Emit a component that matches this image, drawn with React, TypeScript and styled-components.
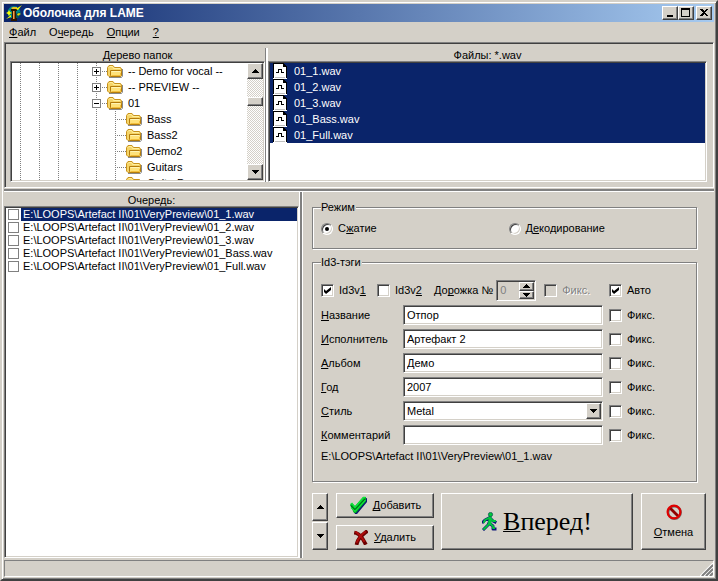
import React from "react";
import styled, { createGlobalStyle, css } from "styled-components";

const face = "#d4d0c8";
const navy = "#0a246a";
const shade = "#808080";
const dark = "#404040";

const Global = createGlobalStyle`
  * { box-sizing: border-box; }
  html, body { margin: 0; padding: 0; background: ${face}; }
  body, button, input, select {
    font-family: "Liberation Sans", Arial, sans-serif;
    font-size: 11px;
    line-height: 13px;
    color: #000;
  }
  u { text-underline-offset: 1px; text-decoration-thickness: 1px; text-decoration-skip-ink: none; }
`;

const raised = css`
  background: ${face};
  border: 1px solid;
  border-color: #fff ${dark} ${dark} #fff;
  box-shadow: inset -1px -1px 0 ${shade};
`;

const sunken = css`
  border: 1px solid;
  border-color: ${shade} #fff #fff ${shade};
  box-shadow: inset 1px 1px 0 ${dark}, inset -1px -1px 0 ${face};
  padding: 1px;
`;

const Window = styled.main`
  display: flex;
  flex-direction: column;
  min-height: 100vh;
  padding: 2px;
  background: ${face};
  border: 2px solid;
  border-color: ${face} ${dark} ${dark} ${face};
  box-shadow: inset 1px 1px 0 #fff, inset -1px -1px 0 ${shade};
`;

const TitleBar = styled.header`
  display: flex;
  align-items: center;
  flex: none;
  height: 18px;
  padding: 0 2px;
  gap: 1px;
  background: linear-gradient(to right, ${navy}, #a6caf0);
`;

const Title = styled.h1`
  flex: 1;
  margin: 0;
  color: #fff;
  font-size: 12px;
  line-height: 16px;
  font-weight: bold;
`;

const TitleButtons = styled.div`
  display: flex;
`;

const TitleButton = styled.button`
  ${raised}
  width: 16px;
  height: 14px;
  padding: 0;
  display: flex;
  align-items: center;
  justify-content: center;
  &:last-child { margin-left: 2px; }
`;

const MenuBar = styled.nav`
  display: flex;
  flex: none;
  align-items: center;
  gap: 13px;
  height: 20px;
  padding: 0 5px;
`;

const MenuItem = styled.button`
  border: 0;
  padding: 0;
  background: none;
`;

const Browser = styled.section`
  ${sunken}
  display: flex;
  flex: none;
  height: 146px;
  padding: 1px 6px 5px 5px;
`;

const Pane = styled.div<{ $width?: string }>`
  display: flex;
  flex-direction: column;
  min-width: 0;
  min-height: 0;
  flex: ${(p) => (p.$width ? `0 0 ${p.$width}` : "1 1 0")};
`;

const PaneTitle = styled.h2<{ $height: number }>`
  margin: 0;
  flex: none;
  height: ${(p) => p.$height}px;
  line-height: 12px;
  padding-top: ${(p) => p.$height - 12}px;
  font-size: 11px;
  font-weight: normal;
  text-align: center;
`;

const SplitLine = styled.div`
  flex: none;
  width: 3px;
  margin-top: 4px;
  border-left: 1px solid ${shade};
  border-right: 2px solid #fff;
`;

const HorizontalSplitter = styled.div`
  flex: none;
  height: 4px;
  background: ${shade};
  border-top: 1px solid ${face};
  border-bottom: 1px solid #fff;
`;

const VerticalSplitter = styled.div`
  flex: none;
  width: 4px;
  background: ${shade};
  border-left: 1px solid #fff;
  border-right: 1px solid #fff;
`;

const ListBox = styled.div`
  ${sunken}
  display: flex;
  flex: 1;
  min-height: 0;
  background: #fff;
  overflow: hidden;
`;

const Rows = styled.ul`
  flex: 1;
  min-width: 0;
  margin: 0;
  padding: 0;
  list-style: none;
  overflow: hidden;
  white-space: nowrap;
`;

const TreeRow = styled.li`
  display: flex;
  height: 16px;
  align-items: center;
`;

const dotsDown = `repeating-linear-gradient(to bottom, ${shade} 0 1px, transparent 1px 2px) 8px 0 / 1px 100% no-repeat`;
const dotsAcross = `repeating-linear-gradient(to right, ${shade} 0 1px, transparent 1px 2px) 8px 8px / 11px 1px no-repeat`;

const Indent = styled.span<{ $branch?: boolean }>`
  flex: none;
  display: flex;
  align-items: center;
  width: 19px;
  height: 16px;
  padding-left: 4px;
  background: ${(p) => (p.$branch ? `${dotsDown}, ${dotsAcross}` : dotsDown)};
`;

const Expander = styled.button`
  width: 9px;
  height: 9px;
  padding: 0;
  border: 1px solid ${shade};
  background: #fff;
  display: flex;
`;

const TreeLabel = styled.span`
  margin-left: 5px;
`;

const ScrollBar = styled.div`
  display: flex;
  flex-direction: column;
  flex: none;
  width: 16px;
  background: repeating-conic-gradient(#fff 0 25%, ${face} 0 50%) 0 0 / 2px 2px;
`;

const ScrollButton = styled.button`
  ${raised}
  flex: none;
  width: 16px;
  height: 16px;
  padding: 0;
  display: flex;
  align-items: center;
  justify-content: center;
`;

const Thumb = styled.div`
  ${raised}
  height: 9px;
  margin: 18px 0 auto;
`;

const FileRow = styled.li`
  display: flex;
  align-items: center;
  height: 16px;
  gap: 7px;
  padding-left: 3px;
  color: #fff;
  background: ${navy};
`;

const Work = styled.div`
  display: flex;
  flex: 1;
`;

const QueueRow = styled.li`
  height: 13px;
`;

const QueueLabel = styled.label<{ $selected: boolean }>`
  display: flex;
  height: 13px;
  align-items: center;
  gap: 2px;
  padding-left: 2px;
  span {
    flex: 1;
    padding-left: 2px;
    line-height: 13px;
    color: ${(p) => (p.$selected ? "#fff" : "#000")};
    background: ${(p) => (p.$selected ? navy : "transparent")};
  }
`;

const FlatCheck = styled.input`
  appearance: none;
  flex: none;
  width: 11px;
  height: 11px;
  margin: 0;
  border: 1px solid ${shade};
  background: #fff;
  &:checked { box-shadow: inset 0 0 0 2px #fff; background: #000; }
`;

const Options = styled.form`
  flex: 1;
  min-width: 0;
  display: flex;
  flex-direction: column;
  padding: 9px 8px 8px 9px;
`;

const Group = styled.fieldset`
  min-width: 0;
  margin: 0 9px 7px 0;
  padding: 0 0 0 8px;
  border: 1px solid ${shade};
  box-shadow: 1px 1px 0 #fff, inset 1px 1px 0 #fff;
`;

const Legend = styled.legend`
  padding: 0 1px 0 0;
  background: ${face};
`;

const ModeRow = styled.div`
  display: grid;
  grid-template-columns: 1fr 1fr;
  height: 34px;
  padding: 8px 0 0;
  align-items: start;
`;

const Choice = styled.label<{ $disabled?: boolean; $width?: number }>`
  display: flex;
  align-items: center;
  gap: 5px;
  width: ${(p) => (p.$width ? `${p.$width}px` : "auto")};
  color: ${(p) => (p.$disabled ? shade : "#000")};
  text-shadow: ${(p) => (p.$disabled ? "1px 1px 0 #fff" : "none")};
`;

const Check = styled.input`
  appearance: none;
  ${sunken}
  flex: none;
  display: grid;
  place-items: center;
  width: 13px;
  height: 13px;
  margin: 0;
  background: #fff;
  &:disabled { background: ${face}; }
  &:checked::before {
    content: "";
    width: 7px;
    height: 7px;
    background: #000;
    clip-path: polygon(0 29%, 29% 58%, 100% 0, 100% 42%, 29% 100%, 0 72%);
  }
`;

const Radio = styled(Check)`
  border-radius: 50%;
  width: 12px;
  height: 12px;
  &:checked::before {
    width: 4px;
    height: 4px;
    clip-path: none;
    border-radius: 50%;
  }
`;

const TagGrid = styled.div`
  display: grid;
  grid-template-columns: 82px minmax(0, 1fr) 87px;
  row-gap: 4px;
  align-items: center;
  padding: 11px 6px 0 0;
`;

const TagTop = styled.div`
  grid-column: 1 / 3;
  display: flex;
  align-items: center;
`;

const FixCell = styled.div`
  padding-left: 6px;
`;

const TrackLabel = styled.label`
  margin-right: 3px;
  white-space: nowrap;
`;

const Spin = styled.span`
  ${sunken}
  display: flex;
  flex: none;
  width: 40px;
  height: 21px;
  margin-right: 8px;
`;

const SpinInput = styled.input`
  flex: 1;
  width: 0;
  min-width: 0;
  border: 0;
  padding: 0 0 0 2px;
  background: none;
  color: ${shade};
`;

const SpinButtons = styled.span`
  display: flex;
  flex-direction: column;
  width: 15px;
`;

const SpinButton = styled.button`
  ${raised}
  flex: 1;
  min-height: 0;
  padding: 0;
  display: flex;
  align-items: center;
  justify-content: center;
`;

const TextField = styled.input`
  ${sunken}
  width: 100%;
  height: 20px;
  padding: 0 3px;
  background: #fff;
  outline: none;
`;

const SelectBox = styled.span`
  ${sunken}
  position: relative;
  display: flex;
  height: 20px;
  background: #fff;
`;

const Select = styled.select`
  appearance: none;
  flex: 1;
  width: 100%;
  border: 0;
  padding: 0 18px 0 2px;
  background: none;
  outline: none;
`;

const SelectArrow = styled.span`
  ${raised}
  position: absolute;
  top: 1px;
  right: 1px;
  bottom: 1px;
  width: 15px;
  display: flex;
  align-items: center;
  justify-content: center;
  pointer-events: none;
`;

const TagPath = styled.p`
  margin: 5px 0 18px;
`;

const Actions = styled.div`
  display: flex;
  margin-top: 4px;
  height: 57px;
`;

const Stack = styled.div<{ $gap: number; $width: number }>`
  display: flex;
  flex-direction: column;
  flex: none;
  width: ${(p) => p.$width}px;
  gap: ${(p) => p.$gap}px;
`;

const PushButton = styled.button<{ $big?: boolean; $column?: boolean }>`
  ${raised}
  flex: 1;
  min-width: 0;
  min-height: 0;
  padding: 0;
  display: flex;
  flex-direction: ${(p) => (p.$column ? "column" : "row")};
  align-items: center;
  justify-content: center;
  gap: 6px;
  ${(p) =>
    p.$big &&
    css`
      margin: 0 8px 0 7px;
      font-family: "Liberation Serif", "Times New Roman", serif;
      font-size: 26px;
      line-height: 30px;
    `}
`;

const CancelSlot = styled.div`
  display: flex;
  flex: none;
  width: 65px;
`;

const ActionGap = styled.div`
  flex: none;
  width: 8px;
`;

const StatusBar = styled.footer`
  flex: none;
  display: flex;
  justify-content: flex-end;
  align-items: flex-end;
  height: 17px;
  margin-top: 2px;
  border: 1px solid;
  border-color: ${shade} #fff #fff ${shade};
`;

const Arrow = ({ up, size = 7 }: { up?: boolean; size?: number }) => {
  const h = (size + 1) / 2;
  return (
    <svg width={size} height={h} shapeRendering="crispEdges" aria-hidden="true">
      <path d={up ? `M${size / 2} 0L${size} ${h}H0Z` : `M0 0H${size}L${size / 2} ${h}Z`} />
    </svg>
  );
};

const AppIcon = () => (
  <svg width="16" height="16" viewBox="0 0 16 16" aria-hidden="true">
    <circle cx="8" cy="7.5" r="6.5" fill="#008484" />
    <path d="M9 9L14 7L13 12L9 14Z" fill="#00505c" />
    <path d="M5 4H11V6H10V13H11V16H5V13H6V6H5Z" fill="#2c1800" />
    <path d="M7 6H9V14H7Z" fill="#a85c18" />
    <path d="M7 6H8V14H7Z" fill="#f0a050" />
    <path d="M5 3L7 2L11 2V4H6Z" fill="#e8c020" />
    <path d="M10 4L16 0L12 5Z" fill="#ff0" />
    <path d="M0 8L2 7L3 5L4 7L6 8L4 9L3 11L2 9Z" fill="#ff0" />
    <path d="M11 9L13 8L15 9L13 10L12 11Z" fill="#e8e000" />
    <path d="M0 14L5 10L5 12Z" fill="#ff0" />
  </svg>
);

const Folder = () => (
  <svg width="16" height="16" viewBox="0 0 16 16" aria-hidden="true">
    <path d="M2 14.5H14.5L15.5 13V6" fill="none" stroke="#8a8a8a" />
    <path d="M.5 12V4.5L2 2.5H6L7.5 4.5H13.5L14.5 6V12.5L13.5 13.5H2Z" fill="#f5d468" stroke="#c8921c" />
    <path d="M2 4.5L3 3.5H5.5L6.5 5.5H13" fill="none" stroke="#fff0a0" />
    <path d="M3.5 7.5H13.5L14.5 8.5V12.5L13.5 13.5H4L3.5 12.5Z" fill="#ffe27a" stroke="#b47c0c" />
    <path d="M4.5 8.5H13" stroke="#fff4b4" fill="none" />
    <path d="M4.5 12.5H13.5V10" stroke="#f2bf3c" fill="none" />
  </svg>
);

const WaveFile = () => (
  <svg width="14" height="16" viewBox="0 0 14 16" shapeRendering="crispEdges" aria-hidden="true">
    <path d="M0 0H10L14 4V16H0Z" fill="#fff" />
    <path d="M.5 15V.5H10.5V3.5H13.5V15" fill="none" stroke="#000" />
    <path d="M11 1H12V2H13V4H11Z" fill="#000" />
    <path d="M2 14.5H12" stroke="#c0c0c0" />
    <path d="M3 9.5H5.5V6.5H8.5V9.5H11" fill="none" stroke="#000" />
  </svg>
);

const CheckMark = () => (
  <svg width="18" height="19" viewBox="0 0 18 19" aria-hidden="true">
    <path d="M2 10L4 9L7 13L15 3L18 2V6L8 18L6 18Z" fill="#0a1a70" />
    <path d="M1 9L3 7L6 10L14 1H17V5L7 17H5Z" fill="#00a424" />
    <path d="M1.5 8.5L3 7.5L6 11.5L14.5 1.5H16.5" fill="none" stroke="#10e83c" strokeWidth="1.4" />
    <path d="M2 11.5L6 15.5L16.5 4" fill="none" stroke="#10e83c" strokeWidth="1.2" />
    <path d="M2 10L6 13.5L16 3" fill="none" stroke="#006414" strokeWidth=".9" />
  </svg>
);

const CrossMark = () => (
  <svg width="14" height="15" viewBox="0 0 14 15" aria-hidden="true">
    <path d="M2 3C6 4 9 9 11 13M12 2C8 5 4 9 3 13" fill="none" stroke="#6c0000" strokeWidth="3.8" strokeLinecap="square" />
    <path d="M2 2C5 4 8 7 10 11M11 2C8 4 4 9 3 12" fill="none" stroke="#b00c0c" strokeWidth="2" strokeLinecap="round" />
  </svg>
);

const Walker = () => (
  <svg width="15" height="19" viewBox="0 0 15 19" aria-hidden="true">
    <g fill="none" strokeLinecap="square" strokeLinejoin="round">
      <path d="M8 6L7 12L4 15L2 17M7 11L11 14V17H13M7 6L3 8L1 10M8 6L11 9L13 10" stroke="#0a1478" strokeWidth="3" />
      <path d="M8 6L7 12L4 15L2 17M7 11L11 14V16H12M7 6L3 8L2 10M8 6L11 9L13 9" stroke="#00c83c" strokeWidth="1.8" />
      <path d="M8 6V11" stroke="#00c83c" strokeWidth="3" />
    </g>
    <circle cx="8.5" cy="2.5" r="2.1" fill="#00c83c" stroke="#0a5a50" strokeWidth=".8" />
  </svg>
);

const Forbidden = () => (
  <svg width="16" height="16" viewBox="0 0 16 16" aria-hidden="true">
    <circle cx="8.5" cy="8.5" r="6.3" fill="none" stroke="#707070" strokeWidth="2.4" />
    <path d="M4 4L12 12" stroke="#900000" strokeWidth="2.8" />
    <circle cx="8" cy="8" r="6.4" fill="none" stroke="#e00000" strokeWidth="2.2" />
  </svg>
);

const Grip = () => (
  <svg width="13" height="13" viewBox="0 0 13 13" aria-hidden="true">
    <path d="M0 13L13 0M4 13L13 4M8 13L13 8" stroke="#fff" strokeWidth="1.2" />
    <path d="M2 13L13 2M6 13L13 6M10 13L13 10" stroke={shade} strokeWidth="2" />
  </svg>
);

type Node = { name: string; depth: number; open?: boolean };

const tree: Node[] = [
  { name: "-- Demo for vocal --", depth: 4, open: false },
  { name: "-- PREVIEW --", depth: 4, open: false },
  { name: "01", depth: 4, open: true },
  { name: "Bass", depth: 5 },
  { name: "Bass2", depth: 5 },
  { name: "Demo2", depth: 5 },
  { name: "Guitars", depth: 5 },
  { name: "GuitarDrums", depth: 5 },
];

const files = ["01_1.wav", "01_2.wav", "01_3.wav", "01_Bass.wav", "01_Full.wav"];
const folder = "E:\\LOOPS\\Artefact II\\01\\VeryPreview\\";

const tags = [
  { id: "title", key: "Н", rest: "азвание", value: "Отпор" },
  { id: "artist", key: "И", rest: "сполнитель", value: "Артефакт 2" },
  { id: "album", key: "А", rest: "льбом", value: "Демо" },
  { id: "year", key: "Г", rest: "од", value: "2007" },
  { id: "genre", key: "С", rest: "тиль", value: "Metal" },
  { id: "comment", key: "К", rest: "омментарий", value: "" },
];

export default function App() {
  return (
    <>
      <Global />
      <Window>
        <TitleBar>
          <AppIcon />
          <Title>Оболочка для LAME</Title>
          <TitleButtons>
            <TitleButton aria-label="Свернуть">
              <svg width="12" height="10"><path d="M3 7H9V9H3Z" /></svg>
            </TitleButton>
            <TitleButton aria-label="Развернуть">
              <svg width="12" height="10" shapeRendering="crispEdges"><path d="M1 0H10V9H1ZM2 2V8H9V2Z" fillRule="evenodd" /></svg>
            </TitleButton>
            <TitleButton aria-label="Закрыть">
              <svg width="12" height="10" shapeRendering="crispEdges"><path d="M2 1H4L6 3L8 1H10L7 4.5L10 8H8L6 6L4 8H2L5 4.5Z" /></svg>
            </TitleButton>
          </TitleButtons>
        </TitleBar>
        <MenuBar>
          <MenuItem><u>Ф</u>айл</MenuItem>
          <MenuItem>О<u>ч</u>ередь</MenuItem>
          <MenuItem><u>О</u>пции</MenuItem>
          <MenuItem><u>?</u></MenuItem>
        </MenuBar>

        <Browser>
          <Pane $width="255px">
            <PaneTitle $height={17}>Дерево папок</PaneTitle>
            <ListBox>
              <Rows>
                {tree.map((node) => (
                  <TreeRow key={node.name}>
                    {Array.from({ length: node.depth }, (_, i) => (
                      <Indent key={i} />
                    ))}
                    <Indent $branch>
                      {node.open !== undefined && (
                        <Expander aria-label={node.open ? "Свернуть папку" : "Раскрыть папку"}>
                          <svg width="7" height="7" shapeRendering="crispEdges">
                            <path d={node.open ? "M1 3H6V4H1Z" : "M1 3H6V4H1ZM3 1H4V6H3Z"} />
                          </svg>
                        </Expander>
                      )}
                    </Indent>
                    <Folder />
                    <TreeLabel>{node.name}</TreeLabel>
                  </TreeRow>
                ))}
              </Rows>
              <ScrollBar>
                <ScrollButton aria-label="Вверх"><Arrow up /></ScrollButton>
                <Thumb />
                <ScrollButton aria-label="Вниз"><Arrow /></ScrollButton>
              </ScrollBar>
            </ListBox>
          </Pane>
          <SplitLine />
          <Pane>
            <PaneTitle $height={17}>Файлы: *.wav</PaneTitle>
            <ListBox>
              <Rows>
                {files.map((file) => (
                  <FileRow key={file}>
                    <WaveFile />
                    {file}
                  </FileRow>
                ))}
              </Rows>
            </ListBox>
          </Pane>
        </Browser>

        <HorizontalSplitter />

        <Work>
          <Pane $width="295px">
            <PaneTitle $height={14}>Очередь:</PaneTitle>
            <ListBox>
              <Rows>
                {files.map((file, i) => (
                  <QueueRow key={file}>
                    <QueueLabel $selected={i === 0}>
                      <FlatCheck type="checkbox" />
                      <span>{folder + file}</span>
                    </QueueLabel>
                  </QueueRow>
                ))}
              </Rows>
            </ListBox>
          </Pane>
          <VerticalSplitter />
          <Options onSubmit={(e) => e.preventDefault()}>
            <Group>
              <Legend>Режим</Legend>
              <ModeRow>
                <Choice>
                  <Radio type="radio" name="mode" defaultChecked />
                  <span>С<u>ж</u>атие</span>
                </Choice>
                <Choice>
                  <Radio type="radio" name="mode" />
                  <span>Д<u>е</u>кодирование</span>
                </Choice>
              </ModeRow>
            </Group>

            <Group>
              <Legend>Id3-тэги</Legend>
              <TagGrid>
                <TagTop>
                  <Choice $width={56}>
                    <Check type="checkbox" defaultChecked />
                    <span>Id3v<u>1</u></span>
                  </Choice>
                  <Choice $width={57}>
                    <Check type="checkbox" />
                    <span>Id3v<u>2</u></span>
                  </Choice>
                  <TrackLabel htmlFor="track">До<u>р</u>ожка №</TrackLabel>
                  <Spin>
                    <SpinInput id="track" defaultValue="0" disabled />
                    <SpinButtons>
                      <SpinButton type="button" aria-label="Больше"><Arrow up /></SpinButton>
                      <SpinButton type="button" aria-label="Меньше"><Arrow /></SpinButton>
                    </SpinButtons>
                  </Spin>
                  <Choice $disabled>
                    <Check type="checkbox" disabled />
                    <span>Фикс.</span>
                  </Choice>
                </TagTop>
                <FixCell>
                  <Choice>
                    <Check type="checkbox" defaultChecked />
                    <span>Авто</span>
                  </Choice>
                </FixCell>
                {tags.map((tag) => (
                  <React.Fragment key={tag.id}>
                    <label htmlFor={tag.id}><u>{tag.key}</u>{tag.rest}</label>
                    {tag.id === "genre" ? (
                      <SelectBox>
                        <Select id={tag.id} defaultValue={tag.value}>
                          <option>{tag.value}</option>
                        </Select>
                        <SelectArrow><Arrow /></SelectArrow>
                      </SelectBox>
                    ) : (
                      <TextField id={tag.id} defaultValue={tag.value} />
                    )}
                    <FixCell>
                      <Choice>
                        <Check type="checkbox" />
                        <span>Фикс.</span>
                      </Choice>
                    </FixCell>
                  </React.Fragment>
                ))}
              </TagGrid>
              <TagPath>{folder + files[0]}</TagPath>
            </Group>

            <Actions>
              <Stack $gap={1} $width={16}>
                <PushButton type="button" aria-label="Поднять"><Arrow up /></PushButton>
                <PushButton type="button" aria-label="Опустить"><Arrow /></PushButton>
              </Stack>
              <ActionGap />
              <Stack $gap={7} $width={98}>
                <PushButton type="button"><CheckMark /><span><u>Д</u>обавить</span></PushButton>
                <PushButton type="button"><CrossMark /><span><u>У</u>далить</span></PushButton>
              </Stack>
              <PushButton type="submit" $big><Walker /><span><u>В</u>перед!</span></PushButton>
              <CancelSlot>
                <PushButton type="button" $column><Forbidden /><span><u>О</u>тмена</span></PushButton>
              </CancelSlot>
            </Actions>
          </Options>
        </Work>
        <StatusBar><Grip /></StatusBar>
      </Window>
    </>
  );
}
